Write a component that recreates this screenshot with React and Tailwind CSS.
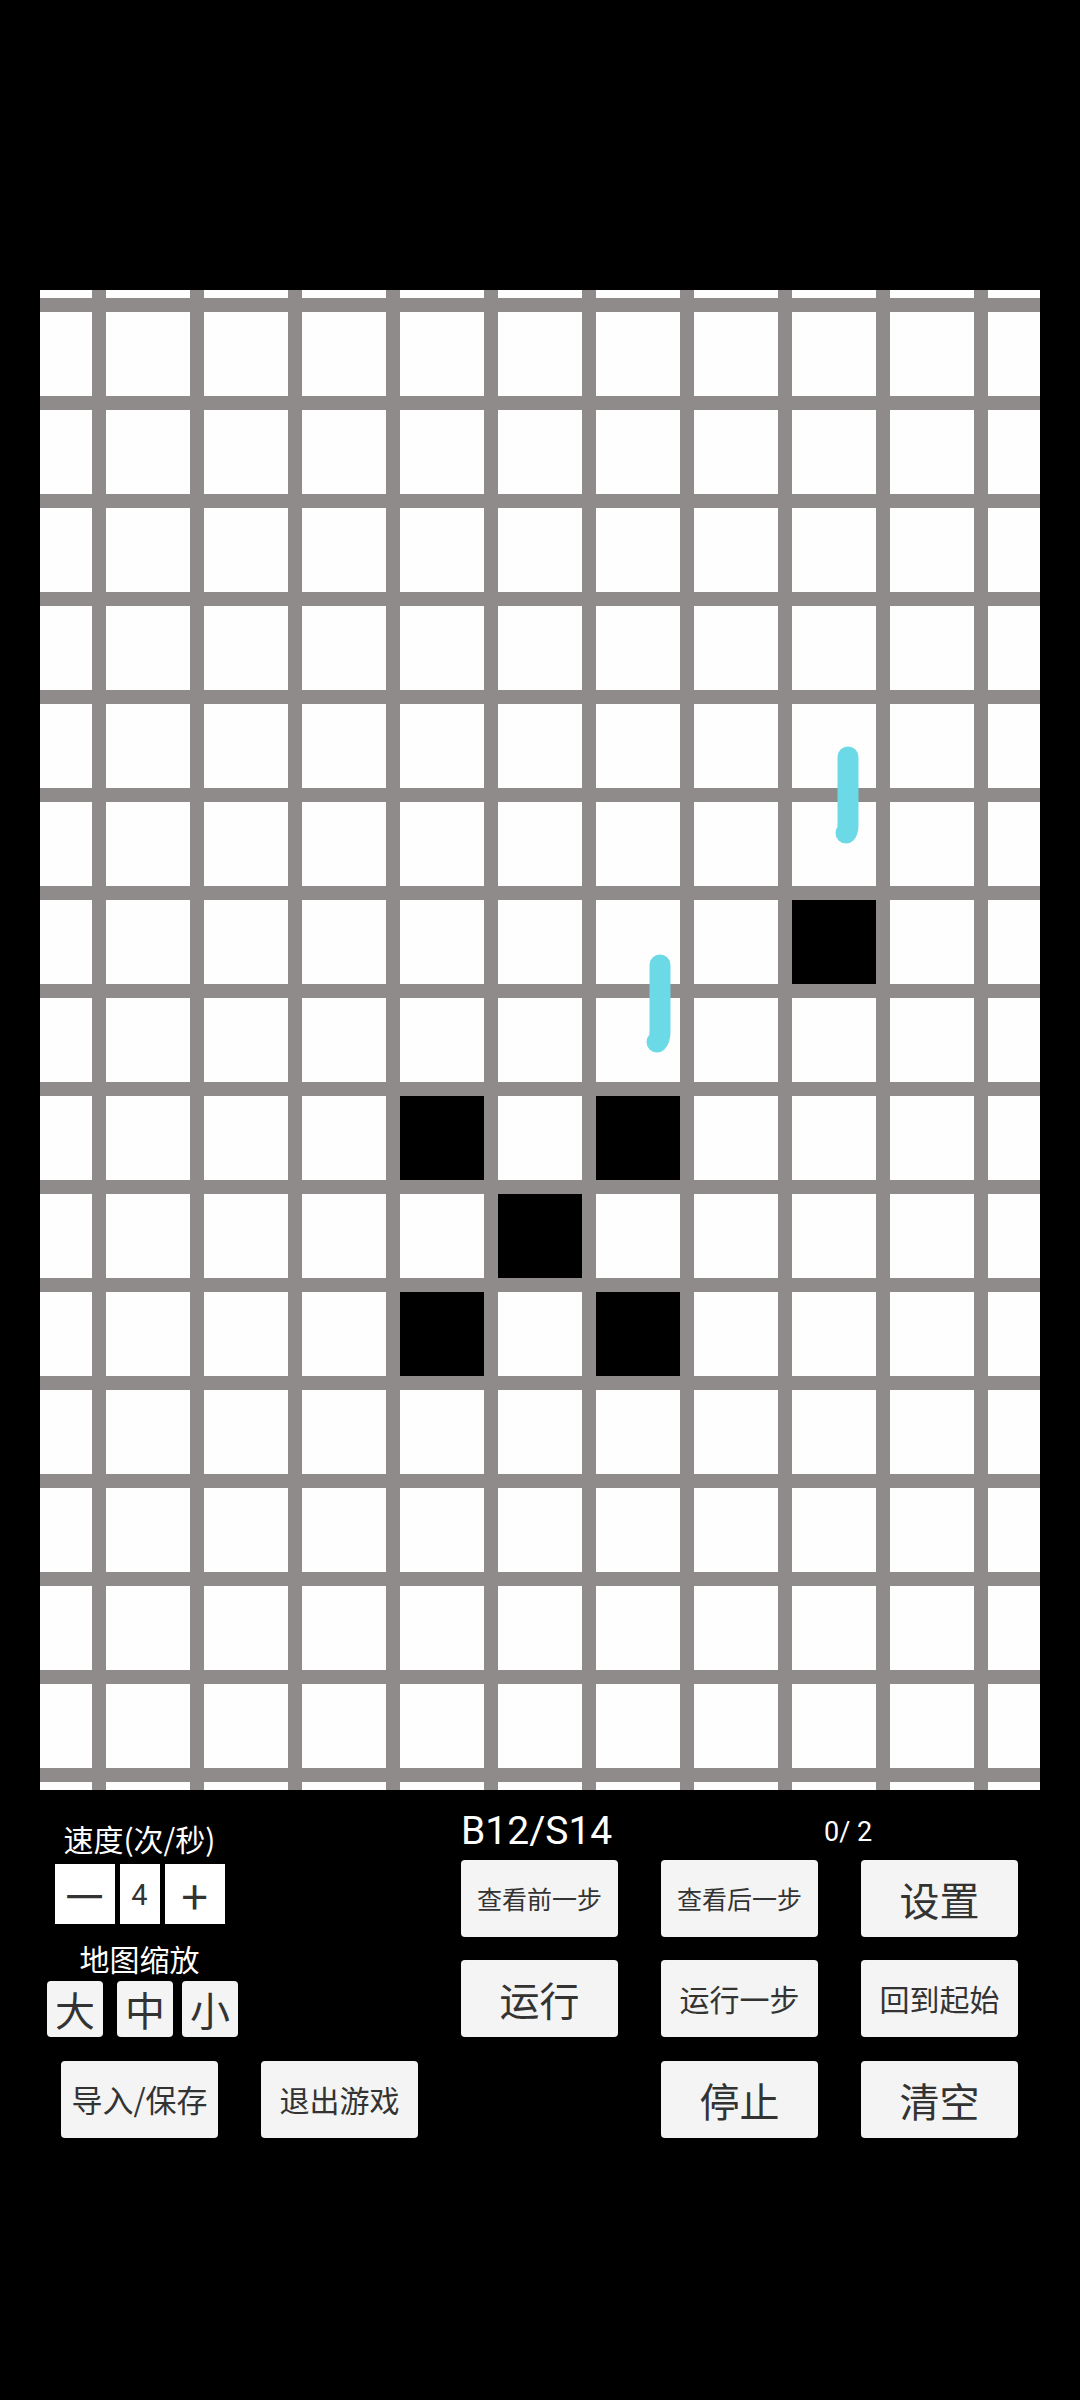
import React from 'react';

const CJK = "font-['Noto_Sans_CJK_SC',sans-serif]";
const LATIN = "font-['Roboto','Noto_Sans_CJK_SC',sans-serif]";

// black (alive) cells on the board, [column, row]
const alive = [
    [3, 8],
    [5, 8],
    [4, 9],
    [3, 10],
    [5, 10],
    [7, 6],
];

function Board() {
    const cols = Array.from({ length: 10 }, (_, i) => i);
    const rows = Array.from({ length: 16 }, (_, i) => i);

    return (
        <svg width="1000" height="1500" viewBox="0 0 1000 1500" className="block">
            <rect x="0" y="0" width="1000" height="1500" fill="#fefefe" />
            {alive.map(([c, r]) => (
                <rect key={`${c}-${r}`} x={66 + 98 * c} y={22 + 98 * r} width="84" height="84" fill="#000" />
            ))}
            {rows.map((r) => (
                <rect key={`h${r}`} x="0" y={8 + 98 * r} width="1000" height="14" fill="#8e8b8a" />
            ))}
            {cols.map((c) => (
                <rect key={`v${c}`} x={52 + 98 * c} y="0" width="14" height="1500" fill="#8e8b8a" />
            ))}
            <path
                d="M808 467 L808 535 Q808 541 806 543"
                stroke="#6cd9e7"
                strokeWidth="21"
                strokeLinecap="round"
                fill="none"
            />
            <path
                d="M620 675 L620 742 Q620 749 617 752"
                stroke="#6cd9e7"
                strokeWidth="21"
                strokeLinecap="round"
                fill="none"
            />
        </svg>
    );
}

function Btn({ children, className }) {
    return (
        <div
            className={`h-[77px] rounded-[4px] bg-[#f4f4f4] text-[#333] flex items-center justify-center whitespace-nowrap ${CJK} ${className}`}
        >
            {children}
        </div>
    );
}

export default function App() {
    return (
        <div className="w-[1080px] h-[2400px] bg-black overflow-hidden pt-[290px] pl-[40px]">
            <Board />

            <div className="ml-[21px] grid grid-cols-[repeat(5,157px)] gap-x-[43px]">
                {/* speed + zoom controls */}
                <div className="col-start-1 row-start-1 row-span-3 flex flex-col items-center pt-[30px]">
                    <div className={`text-[30px] leading-[36px] text-white whitespace-nowrap ${CJK}`}>
                        速度(次/秒)
                    </div>
                    <div className="mt-[8px] flex gap-[5px]">
                        <div className={`w-[60px] h-[60px] bg-white text-[#333] flex items-center justify-center text-[38px] ${CJK}`}>
                            一
                        </div>
                        <div className={`w-[40px] h-[60px] bg-white text-[#333] flex items-center justify-center text-[29px] pt-[3px] ${LATIN}`}>
                            4
                        </div>
                        <div className={`w-[60px] h-[60px] bg-white text-[#333] flex items-center justify-center text-[48px] leading-none ${CJK}`}>
                            +
                        </div>
                    </div>
                    <div className={`mt-[16px] text-[30px] leading-[36px] text-white whitespace-nowrap ${CJK}`}>
                        地图缩放
                    </div>
                    <div className="mt-[5px] ml-[6px] flex">
                        <div className={`w-[56px] h-[56px] rounded-[4px] bg-[#f4f4f4] text-[#333] flex items-center justify-center text-[40px] ${CJK}`}>
                            大
                        </div>
                        <div className={`ml-[14px] w-[56px] h-[56px] rounded-[4px] bg-[#f4f4f4] text-[#333] flex items-center justify-center text-[40px] ${CJK}`}>
                            中
                        </div>
                        <div className={`ml-[9px] w-[56px] h-[56px] rounded-[4px] bg-[#f4f4f4] text-[#333] flex items-center justify-center text-[40px] ${CJK}`}>
                            小
                        </div>
                    </div>
                </div>

                {/* rule + generation counter */}
                <div className="col-start-3 col-span-3 row-start-1 mt-[22px] flex items-end">
                    <div className={`w-[363px] text-[39px] leading-[39px] text-white ${LATIN}`}>B12/S14</div>
                    <div className={`mb-[5px] text-[27px] leading-[27px] text-white whitespace-pre ${LATIN}`}>0/ 2</div>
                </div>

                <Btn className="col-start-3 row-start-2 mt-[9px] text-[25px]">查看前一步</Btn>
                <Btn className="col-start-4 row-start-2 mt-[9px] text-[25px]">查看后一步</Btn>
                <Btn className="col-start-5 row-start-2 mt-[9px] text-[40px]">设置</Btn>

                <Btn className="col-start-3 row-start-3 mt-[23px] text-[40px]">运行</Btn>
                <Btn className="col-start-4 row-start-3 mt-[23px] text-[30px]">运行一步</Btn>
                <Btn className="col-start-5 row-start-3 mt-[23px] text-[30px]">回到起始</Btn>

                <Btn className="col-start-1 row-start-4 mt-[24px] text-[31px]">导入/保存</Btn>
                <Btn className="col-start-2 row-start-4 mt-[24px] text-[30px]">退出游戏</Btn>
                <Btn className="col-start-4 row-start-4 mt-[24px] text-[40px]">停止</Btn>
                <Btn className="col-start-5 row-start-4 mt-[24px] text-[40px]">清空</Btn>
            </div>
        </div>
    );
}
